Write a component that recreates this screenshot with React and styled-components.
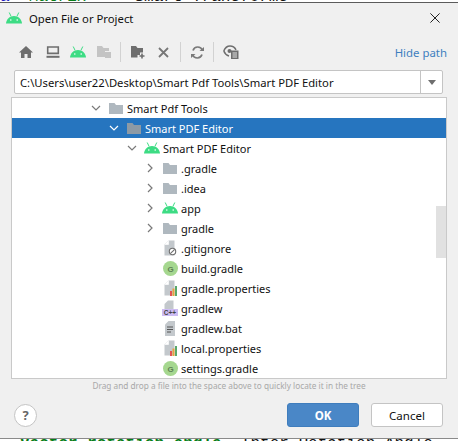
import React from "react";
import styled, { createGlobalStyle } from "styled-components";

const GlobalStyle = createGlobalStyle`
  html, body {
    margin: 0;
    padding: 0;
    background: #fff;
  }
  body {
    width: 458px;
    height: 441px;
    overflow: hidden;
    font-family: "Noto Sans", "Open Sans", sans-serif;
  }
`;

const Screen = styled.div`
  width: 458px;
  height: 441px;
  display: flex;
  flex-direction: column;
  overflow: hidden;
  background: #fff;
`;

/* editor text peeking out above and below the dialog */
const CodeStrip = styled.div`
  height: 2px;
  flex: none;
  display: flex;
  align-items: ${(p) => (p.$top ? "flex-end" : "flex-start")};
  overflow: hidden;
  white-space: pre;
  font-family: "Liberation Mono", monospace;
  font-size: 16px;
  line-height: ${(p) => (p.$top ? "9px" : "11px")};
  padding-left: ${(p) => p.$indent}px;
`;

const CodeSpan = styled.span`
  color: ${(p) => p.$color};
  font-weight: ${(p) => (p.$bold ? 700 : 400)};
`;

const Dialog = styled.div`
  flex: none;
  height: 437px;
  box-sizing: border-box;
  border-top: 1px solid #5c5c5c;
  border-bottom: 1px solid #8a8a8a;
  background: #f0f0f0;
  display: flex;
  flex-direction: column;
`;

const TitleBar = styled.div`
  height: 30px;
  padding: 0 18px 0 6px;
  display: flex;
  align-items: center;
  flex: none;
`;

const Title = styled.span`
  margin-left: 7px;
  font-size: 11.3px;
  color: #111;
  flex: 1;
`;

const Toolbar = styled.div`
  height: 30px;
  margin-top: 4px;
  padding: 0 11px 0 19px;
  display: flex;
  align-items: center;
  flex: none;
`;

const ToolIcon = styled.span`
  display: flex;
  width: ${(p) => p.$width || 16}px;
  margin-right: ${(p) => p.$gap ?? 11}px;
`;

const Separator = styled.span`
  width: 1px;
  height: 20px;
  background: #d2d2d2;
  margin-right: ${(p) => p.$gap ?? 10}px;
`;

const HidePath = styled.a`
  margin-left: auto;
  font-size: 11.4px;
  color: #3f7fbf;
`;

const PathField = styled.div`
  height: 24px;
  margin: 3px 15px 0 14px;
  box-sizing: border-box;
  background: #fff;
  border: 1px solid #c4c4c4;
  border-radius: 2px;
  display: flex;
  align-items: center;
  flex: none;
`;

const PathText = styled.span`
  flex: 1;
  padding-left: 5px;
  font-size: 11.25px;
  color: #111;
  white-space: nowrap;
`;

const DropButton = styled.span`
  width: 21px;
  height: 100%;
  border-left: 1px solid #c4c4c4;
  display: flex;
  align-items: center;
  justify-content: center;
`;

const DropArrow = styled.span`
  width: 0;
  height: 0;
  border-left: 4px solid transparent;
  border-right: 4px solid transparent;
  border-top: 5px solid #6e6e6e;
`;

const Tree = styled.div`
  position: relative;
  height: 282px;
  margin: 3px 11px 0 11px;
  box-sizing: border-box;
  background: #fff;
  border: 1px solid #c9c9c9;
  flex: none;
  overflow: hidden;
`;

const Row = styled.div`
  height: 20px;
  box-sizing: border-box;
  padding-left: ${(p) => 59 + p.$depth * 18}px;
  display: flex;
  align-items: center;
  background: ${(p) => (p.$selected ? "#2675bf" : "transparent")};
  color: ${(p) => (p.$selected ? "#fff" : "#111")};
  font-size: 11px;
`;

const Toggle = styled.span`
  width: 14px;
  margin-right: 5px;
  flex: none;
  display: flex;
  justify-content: center;
`;

const RowIcon = styled.span`
  width: 16px;
  margin-right: 3px;
  flex: none;
  display: flex;
  justify-content: center;
`;

const ScrollThumb = styled.div`
  position: absolute;
  right: 0;
  top: 108px;
  width: 10px;
  height: 52px;
  background: #e1e1e1;
`;

const Hint = styled.div`
  text-align: center;
  font-size: 8.25px;
  line-height: 14px;
  color: #a8a8a8;
  flex: none;
`;

const Footer = styled.div`
  margin-top: 10px;
  padding: 0 15px 0 14px;
  display: flex;
  align-items: center;
  flex: none;
`;

const Help = styled.span`
  width: 23px;
  height: 23px;
  box-sizing: border-box;
  border-radius: 50%;
  border: 1px solid #c4c4c4;
  background: #fff;
  display: flex;
  align-items: center;
  justify-content: center;
  font-size: 13px;
  font-weight: 700;
  color: #666;
`;

const Button = styled.button`
  width: 72px;
  height: 24px;
  margin-left: ${(p) => (p.$primary ? "auto" : "12px")};
  padding: 0;
  box-sizing: border-box;
  border-radius: 3px;
  border: 1px solid ${(p) => (p.$primary ? "#3f7dbd" : "#c4c4c4")};
  background: ${(p) => (p.$primary ? "#4a87c7" : "#fff")};
  color: ${(p) => (p.$primary ? "#fff" : "#111")};
  font-family: inherit;
  font-size: 11.5px;
  font-weight: ${(p) => (p.$primary ? 700 : 400)};
`;

const Android = ({ width = 16, color = "#3ddc84" }) => (
  <svg width={width} height={(width * 12) / 16} viewBox="0 0 16 12">
    <path d="M0 11.5C0.3 7.5 3.5 4 8 4s7.7 3.5 8 7.5z" fill={color} />
    <path d="M3.2 0.5L5 4.2M12.8 0.5L11 4.2" stroke={color} strokeWidth="1" fill="none" />
    <circle cx="4.8" cy="8" r="0.8" fill="#fff" />
    <circle cx="11.2" cy="8" r="0.8" fill="#fff" />
  </svg>
);

const Folder = ({ color = "#afb8bf" }) => (
  <svg width="14" height="11" viewBox="0 0 14 11">
    <path d="M0 0h5.5l1.5 2h7v9H0z" fill={color} />
  </svg>
);

const Chevron = ({ open, color = "#7a7a7a" }) => (
  <svg width="10" height="10" viewBox="0 0 10 10">
    <path
      d={open ? "M1 3l4 4 4-4" : "M3 1l4 4-4 4"}
      stroke={color}
      strokeWidth="1.2"
      fill="none"
    />
  </svg>
);

const FileShape = ({ children }) => (
  <svg width="16" height="16" viewBox="-2 0 16 16">
    <path d="M0.5 4.5L4.5 0.5h6v15h-10z" fill="#c3c8cc" />
    <path d="M4.5 0.5v4h-4" fill="#fff" stroke="#fff" strokeWidth="0.6" />
    {children}
  </svg>
);

const GitIgnore = () => (
  <FileShape>
    <circle cx="8.5" cy="11.5" r="3.2" fill="#fff" stroke="#6e6e6e" strokeWidth="1.1" />
    <path d="M6.3 13.7l4.4-4.4" stroke="#6e6e6e" strokeWidth="1.1" />
  </FileShape>
);

const Props = () => (
  <FileShape>
    <rect x="6" y="11" width="2" height="5" fill="#e05555" />
    <rect x="8.5" y="8.5" width="2" height="7.5" fill="#e8a33d" />
    <rect x="11" y="6" width="2" height="10" fill="#59a869" />
  </FileShape>
);

const GradleBadge = () => (
  <svg width="15" height="15" viewBox="0 0 15 15">
    <circle cx="7.5" cy="7.5" r="7.5" fill="#a5d78f" />
    <text x="7.5" y="10.5" textAnchor="middle" fontSize="8" fontWeight="700" fill="#5f7f55" fontFamily="Liberation Sans, sans-serif">G</text>
  </svg>
);

const CppFile = () => (
  <svg width="16" height="16" viewBox="0 0 16 16">
    <path d="M2.5 4L6 0.5h5.5V9h-9z" fill="#c3c8cc" />
    <rect x="0" y="9" width="16" height="7" fill="#cdbcf3" />
    <text x="8" y="15" textAnchor="middle" fontSize="6.5" fontWeight="700" fill="#444" fontFamily="Liberation Sans, sans-serif">C++</text>
  </svg>
);

const BatFile = () => (
  <svg width="16" height="15" viewBox="-3 0 16 15">
    <path d="M0 3.5L3.5 0H10v15H0z" fill="#c3c8cc" />
    <path d="M2 6h6M2 8.5h6M2 11h4" stroke="#555" strokeWidth="1" />
  </svg>
);

const HomeIcon = () => (
  <svg width="14" height="12" viewBox="0 0 14 12">
    <path d="M7 0L0 6.5h2V12h3.5V8h3v4H12V6.5h2z" fill="#6e6e6e" />
  </svg>
);

const MonitorIcon = () => (
  <svg width="14" height="12" viewBox="0 0 14 12">
    <path d="M1.7 1h10.6v6.4H1.7z" fill="none" stroke="#6e6e6e" strokeWidth="1.6" />
    <rect x="0.5" y="9.8" width="13" height="2" fill="#6e6e6e" />
  </svg>
);

const ProjectFolderIcon = () => (
  <svg width="14" height="12" viewBox="0 0 14 12">
    <path d="M0 0h5l1.5 2H12v3H8v6H0z" fill="#c4c4c4" />
    <rect x="8" y="6" width="6" height="6" fill="#c4c4c4" />
  </svg>
);

const NewFolderIcon = () => (
  <svg width="15" height="13" viewBox="0 0 15 13">
    <path d="M0 0h5l1.5 2H12v4.5H9V9H6.5v2.5H0z" fill="#6e6e6e" />
    <path d="M11 7.5v5M8.5 10h5" stroke="#6e6e6e" strokeWidth="1.6" />
  </svg>
);

const CrossIcon = () => (
  <svg width="11" height="11" viewBox="0 0 11 11">
    <path d="M1 1l9 9M10 1l-9 9" stroke="#777" strokeWidth="1.8" />
  </svg>
);

const RefreshIcon = () => (
  <svg width="13" height="13" viewBox="0 0 13 13">
    <path d="M11.4 4.2A5 5 0 0 0 2 4.4" stroke="#7a7a7a" strokeWidth="1.7" fill="none" />
    <path d="M1.6 8.8a5 5 0 0 0 9.4-.2" stroke="#7a7a7a" strokeWidth="1.7" fill="none" />
    <path d="M8.5 5h4.5V1z" fill="#7a7a7a" />
    <path d="M4.5 8H0v4z" fill="#7a7a7a" />
  </svg>
);

const EyeDocIcon = () => (
  <svg width="16" height="14" viewBox="0 0 16 14">
    <path d="M0.8 6C2 3 4.4 1 7 1s4.8 1.5 6 3.8" stroke="#6e6e6e" strokeWidth="1.5" fill="none" />
    <path d="M0.8 6c1 2.6 3 4.4 5.2 5" stroke="#6e6e6e" strokeWidth="1.5" fill="none" />
    <circle cx="6.5" cy="6" r="2" fill="#6e6e6e" />
    <rect x="8" y="5.5" width="7.5" height="8.5" fill="#6e6e6e" />
    <path d="M9.5 8h4.5M9.5 10h4.5M9.5 12h4.5" stroke="#f0f0f0" strokeWidth="0.9" />
  </svg>
);

const CloseIcon = () => (
  <svg width="10" height="10" viewBox="0 0 10 10">
    <path d="M0.4 0.4l9.2 9.2M9.6 0.4l-9.2 9.2" stroke="#222" strokeWidth="1" />
  </svg>
);

const rows = [
  { id: 1, depth: 1, name: "Smart Pdf Tools", open: true, icon: <Folder /> },
  { id: 2, depth: 2, name: "Smart PDF Editor", open: true, selected: true, icon: <Folder color="#8d9aa5" /> },
  { id: 3, depth: 3, name: "Smart PDF Editor", open: true, icon: <Android /> },
  { id: 4, depth: 4, name: ".gradle", closed: true, icon: <Folder /> },
  { id: 5, depth: 4, name: ".idea", closed: true, icon: <Folder /> },
  { id: 6, depth: 4, name: "app", closed: true, icon: <Android /> },
  { id: 7, depth: 4, name: "gradle", closed: true, icon: <Folder /> },
  { id: 8, depth: 4, name: ".gitignore", icon: <GitIgnore /> },
  { id: 9, depth: 4, name: "build.gradle", icon: <GradleBadge /> },
  { id: 10, depth: 4, name: "gradle.properties", icon: <Props /> },
  { id: 11, depth: 4, name: "gradlew", icon: <CppFile /> },
  { id: 12, depth: 4, name: "gradlew.bat", icon: <BatFile /> },
  { id: 13, depth: 4, name: "local.properties", icon: <Props /> },
  { id: 14, depth: 4, name: "settings.gradle", icon: <GradleBadge /> },
];

const App = () => (
  <Screen>
    <GlobalStyle />
    <CodeStrip $top $indent={0}>
      <CodeSpan $color="#1d1dc0">a</CodeSpan>
      <CodeSpan $color="#067d17">  Matrix </CodeSpan>
      <CodeSpan $color="#111">    Smart Transforms</CodeSpan>
    </CodeStrip>
    <Dialog>
      <TitleBar>
        <Android />
        <Title>Open File or Project</Title>
        <CloseIcon />
      </TitleBar>
      <Toolbar>
        <ToolIcon $width={14} $gap={13}><HomeIcon /></ToolIcon>
        <ToolIcon $width={14} $gap={10}><MonitorIcon /></ToolIcon>
        <ToolIcon $width={16} $gap={11}><Android /></ToolIcon>
        <ToolIcon $width={14} $gap={9}><ProjectFolderIcon /></ToolIcon>
        <Separator />
        <ToolIcon $width={15} $gap={12}><NewFolderIcon /></ToolIcon>
        <ToolIcon $width={11} $gap={11}><CrossIcon /></ToolIcon>
        <Separator />
        <ToolIcon $width={13} $gap={9}><RefreshIcon /></ToolIcon>
        <Separator $gap={9} />
        <ToolIcon $width={16} $gap={0}><EyeDocIcon /></ToolIcon>
        <HidePath>Hide path</HidePath>
      </Toolbar>
      <PathField>
        <PathText>C:\Users\user22\Desktop\Smart Pdf Tools\Smart PDF Editor</PathText>
        <DropButton><DropArrow /></DropButton>
      </PathField>
      <Tree>
        {rows.map((row) => (
          <Row key={row.id} $depth={row.depth} $selected={row.selected}>
            <Toggle>
              {(row.open || row.closed) && (
                <Chevron open={row.open} color={row.selected ? "#fff" : "#7a7a7a"} />
              )}
            </Toggle>
            <RowIcon>{row.icon}</RowIcon>
            {row.name}
          </Row>
        ))}
        <ScrollThumb />
      </Tree>
      <Hint>Drag and drop a file into the space above to quickly locate it in the tree</Hint>
      <Footer>
        <Help>?</Help>
        <Button $primary>OK</Button>
        <Button>Cancel</Button>
      </Footer>
    </Dialog>
    <CodeStrip $indent={20}>
      <CodeSpan $color="#067d17" $bold>Vector rotation angle  </CodeSpan>
      <CodeSpan $color="#111">Inter Rotation Angle</CodeSpan>
    </CodeStrip>
  </Screen>
);

export default App;
